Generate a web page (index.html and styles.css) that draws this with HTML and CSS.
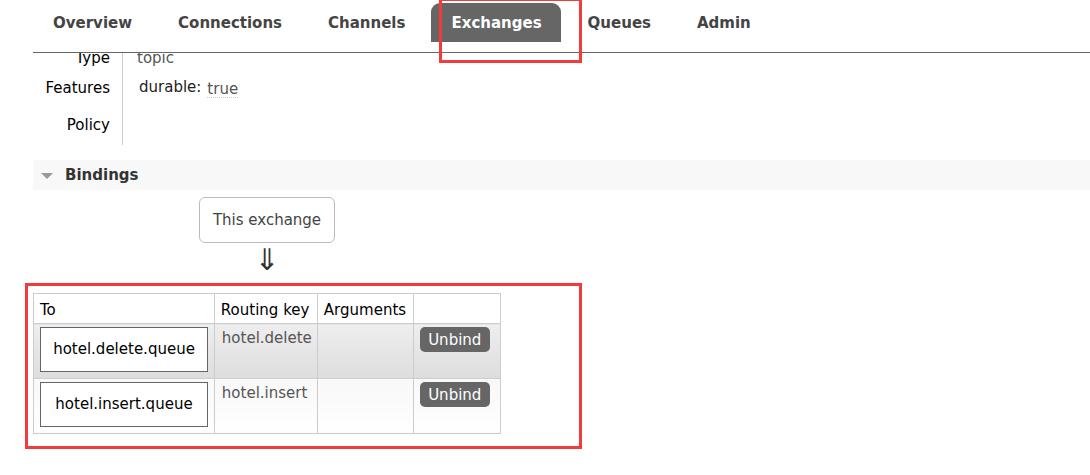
FILE: index.html
```html
<!DOCTYPE html>
<html lang="en">
<head>
<meta charset="utf-8">
<title>Exchange: hotel.topic</title>
<link rel="stylesheet" href="styles.css">
</head>
<body>
<header class="menu">
  <ul class="tabs">
    <li class="tab"><a>Overview</a></li>
    <li class="tab"><a>Connections</a></li>
    <li class="tab"><a>Channels</a></li>
    <li class="tab selected"><a>Exchanges</a></li>
    <li class="tab"><a>Queues</a></li>
    <li class="tab"><a>Admin</a></li>
  </ul>
</header>
<main class="main">
  <div class="info-clip">
    <table class="facts">
      <tr class="row-type"><th>Type</th><td class="val">topic</td></tr>
      <tr class="row-features"><th>Features</th><td><span class="mini-key">durable:</span><span class="mini-val">true</span></td></tr>
      <tr class="row-policy"><th>Policy</th><td></td></tr>
    </table>
  </div>
  <section class="section">
    <h2 class="section-title"><span class="tri"></span>Bindings</h2>
    <div class="bindings">
      <div class="this-ex">This exchange</div>
      <div class="arrow">&#8659;</div>
      <table class="list">
        <thead>
          <tr><th class="c-to">To</th><th class="c-key">Routing key</th><th class="c-args">Arguments</th><th class="c-act"></th></tr>
        </thead>
        <tbody>
          <tr class="alt1">
            <td><span class="queue">hotel.delete.queue</span></td>
            <td class="key">hotel.delete</td>
            <td></td>
            <td><button class="btn">Unbind</button></td>
          </tr>
          <tr class="alt2">
            <td><span class="queue">hotel.insert.queue</span></td>
            <td class="key">hotel.insert</td>
            <td></td>
            <td><button class="btn">Unbind</button></td>
          </tr>
        </tbody>
      </table>
    </div>
  </section>
</main>
<div class="annot annot-tab"></div>
<div class="annot annot-table"></div>
</body>
</html>
```
FILE: styles.css
```css
html, body {
  margin: 0;
  padding: 0;
  background: #fff;
  overflow: hidden;
}
body {
  font-family: "DejaVu Sans", Verdana, sans-serif;
  font-size: 15px;
  line-height: 18px;
  color: #000;
  width: 1090px;
  height: 475px;
  position: relative;
}

/* menu */
.menu {
  padding-left: 33px;
}
.tabs {
  list-style: none;
  margin: 0;
  padding: 3px 0 0 0;
  height: 49px;
  border-bottom: 1px solid #666;
  display: flex;
  gap: 7px;
}
.tab {
  height: 39px;
  display: flex;
  align-items: center;
  padding: 0 19px 0 20px;
  font-size: 15px;
  font-weight: bold;
  color: #444;
  border-radius: 9px 9px 0 0;
}
.tab a { display: block; }
.tab.selected {
  background: #666;
  color: #fff;
}

/* main */
.main {
  padding-left: 33px;
}
.info-clip {
  overflow: hidden;
}
.facts {
  border-collapse: collapse;
  margin-top: -10px;
}
.facts th {
  width: 77px;
  text-align: right;
  font-weight: normal;
  padding: 6px 12px 6px 0;
  border-right: 1px solid #ccc;
  color: #000;
}
.facts td {
  padding: 6px 12px 6px 14px;
  color: #555;
  vertical-align: top;
}
.row-type th, .row-type td { padding-bottom: 5px; }
.row-features th, .row-features td { padding-bottom: 12px; }
.row-policy th, .row-policy td { padding-bottom: 11px; }
.mini-key {
  color: #222;
  margin-left: 2px;
  margin-right: 6px;
}
.mini-val {
  display: inline-block;
  vertical-align: -2px;
  line-height: 16px;
  border-bottom: 1px dotted #ccc;
  color: #555;
}

/* section */
.section {
  margin-top: 15px;
}
.section-title {
  margin: 0;
  height: 30px;
  background: #f8f8f8;
  display: flex;
  align-items: center;
  font-size: 15px;
  font-weight: bold;
  color: #333;
  padding-left: 8px;
  gap: 12px;
}
.tri {
  width: 0;
  height: 0;
  border-left: 6px solid transparent;
  border-right: 6px solid transparent;
  border-top: 6px solid #999;
  margin-top: 1px;
}

.bindings {
  display: inline-flex;
  flex-direction: column;
  align-items: center;
  margin-top: 7px;
}
.this-ex {
  border: 1px solid #bbb;
  border-radius: 6px;
  padding: 13px 12px;
  color: #444;
  width: 110px;
  text-align: center;
}
.arrow {
  font-size: 30px;
  line-height: 24px;
  color: #333;
  margin-top: 5px;
  height: 24px;
}

.list {
  border-collapse: collapse;
  margin-top: 21px;
  width: 468px;
}
.list th, .list td {
  border: 1px solid #ccc;
  vertical-align: top;
  text-align: left;
}
.list th {
  font-weight: normal;
  height: 17px;
  padding: 7px 6px 4px;
  color: #000;
  background: #fff;
}
.list td {
  padding: 3px 5px 3px 6px;
  height: 48px;
}
.c-to { width: 168px; }
.c-key { width: 89px; }
.c-args { width: 83px; }
.c-act { width: 75px; }
.alt1 td {
  background: linear-gradient(to bottom, #eeeeee 0%, #dddddd 100%);
}
.alt2 td {
  background: linear-gradient(to bottom, #f8f8f8 0%, #ffffff 100%);
}
.list td.key {
  color: #555;
  padding-top: 5px;
  padding-bottom: 1px;
  padding-left: 7px;
}
.queue {
  display: block;
  box-sizing: border-box;
  width: 168px;
  height: 45px;
  border: 1px solid #666;
  background: #fff;
  text-align: center;
  line-height: 43px;
  color: #000;
}
.btn {
  font-family: inherit;
  font-size: 15px;
  line-height: 18px;
  margin: 0;
  border: 0;
  background: #666;
  color: #fff;
  border-radius: 5px;
  padding: 4px 8px 3px;
  width: 70px;
  height: 25px;
}

/* annotation boxes */
.annot {
  position: absolute;
  border: 3px solid #f03c3c;
  box-sizing: border-box;
  pointer-events: none;
}
.annot-tab {
  left: 439px;
  top: -2px;
  width: 143px;
  height: 65px;
}
.annot-table {
  left: 25px;
  top: 283px;
  width: 557px;
  height: 166px;
}
```
